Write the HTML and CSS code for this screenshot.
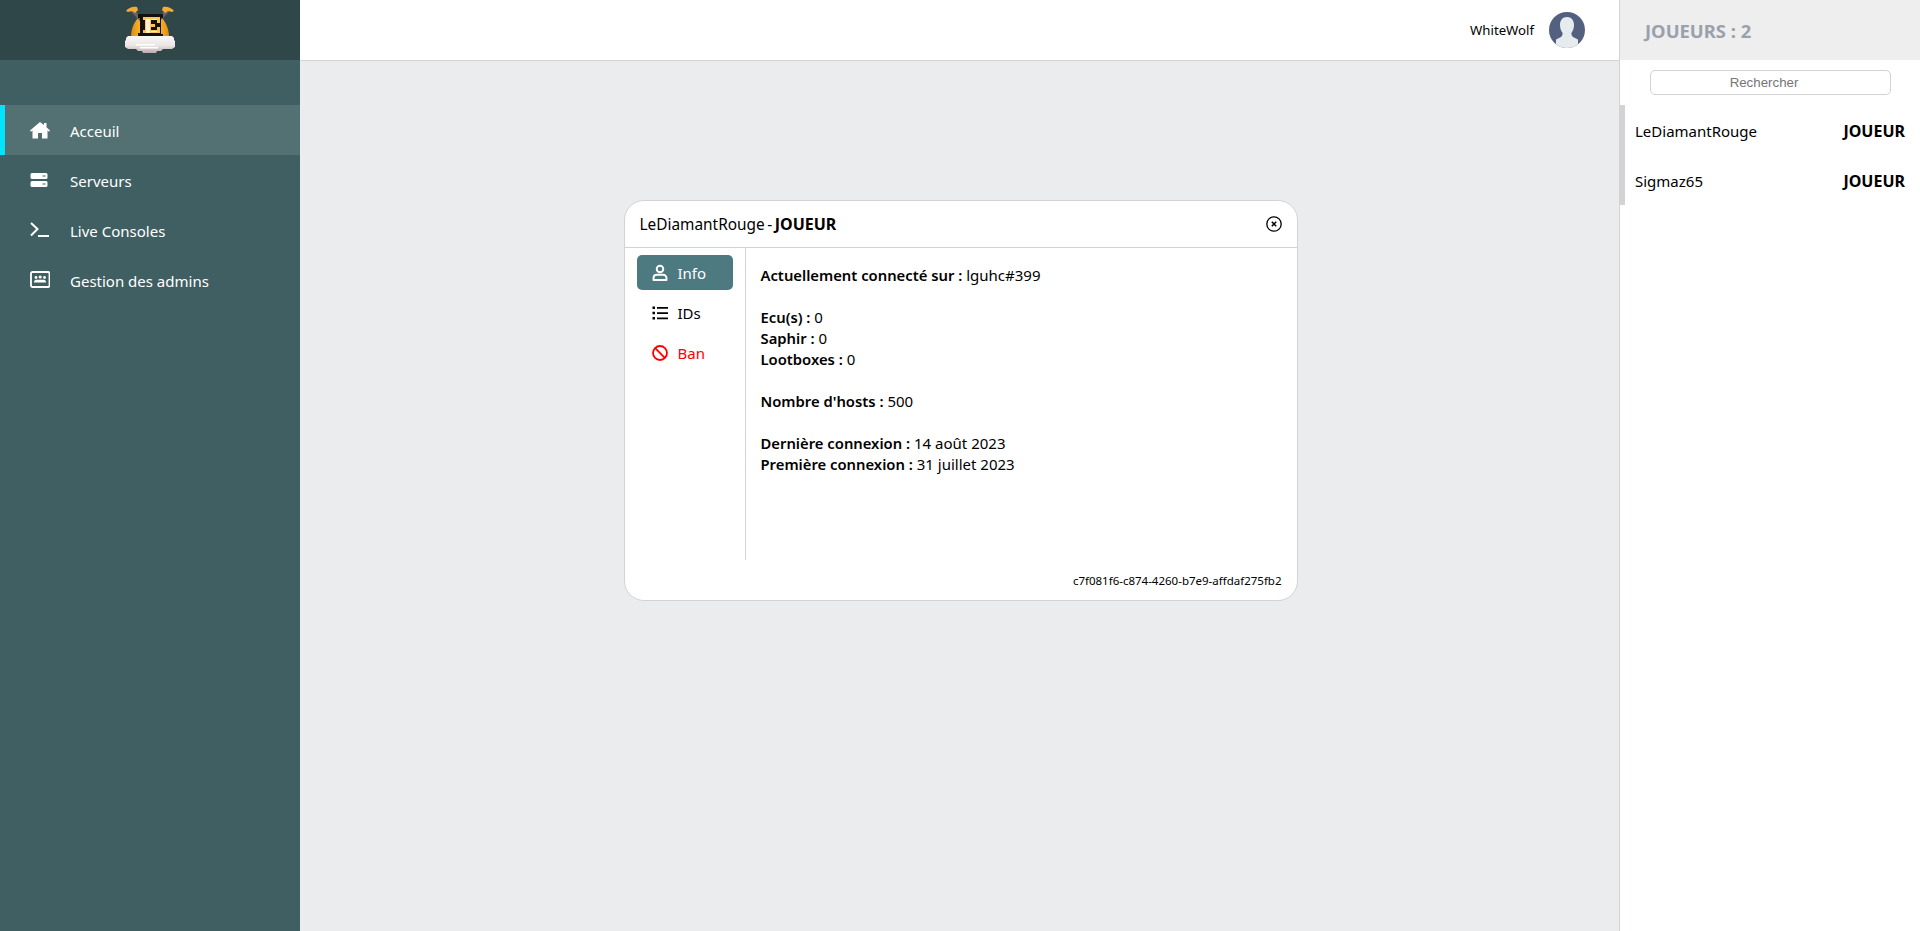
FILE: index.html
```html
<!DOCTYPE html>
<html lang="fr">
<head>
<meta charset="utf-8">
<title>Accueil</title>
<link rel="stylesheet" href="styles.css">
</head>
<body>
<div class="app">
  <aside class="sidebar">
    <div class="brand">
      <svg class="logo" width="50" height="48" viewBox="0 0 50 48">
        <defs>
          <linearGradient id="cloud" x1="0" y1="0" x2="0" y2="1"><stop offset="0" stop-color="#fbf8f8"/><stop offset=".55" stop-color="#ece6e6"/><stop offset="1" stop-color="#b9a9ab"/></linearGradient>
          <linearGradient id="gold" x1="0" y1="0" x2="1" y2="0"><stop offset="0" stop-color="#e08a10"/><stop offset=".3" stop-color="#ffc02e"/><stop offset=".7" stop-color="#ffc02e"/><stop offset="1" stop-color="#e08a10"/></linearGradient>
        </defs>
        <path d="M6 32c0-8 2-14 7-20h24c5 6 7 12 7 20z" fill="url(#gold)"/>
        <path d="M7 4l12 13" stroke="#6f5f66" stroke-width="3.500" fill="none"/>
        <path d="M43 4l-12 13" stroke="#6f5f66" stroke-width="3.500" fill="none"/>
        <path d="M1 5c2-3 7-5 11-4l1 3-3 3-3-2-4 1z" fill="#f5ab32"/>
        <path d="M49 5c-2-3-7-5-11-4l-1 3 3 3 3-2 4 1z" fill="#f5ab32"/>
        <path d="M13 8h25v4h-2v16h2v3H13v-4h2V12h-2z" fill="#17110c"/>
        <path d="M18 11h17v6h-3v-3h-6v4h4v3h-4v3h6v-3h3v6H18v-3h2V14h-2z" fill="#f7c75d"/>
        <path d="M21 13h4v14h-4zM26 13h6v1h-6zM26 25h6v1h-6z" fill="#fff1c9"/>
        <path d="M3 30h44l2 2v2l1 1v6l-3 2h-9l-2 2h-4l-1 2H18l-1-2h-4l-2-2H3l-3-2v-6l1-1v-2z" fill="url(#cloud)"/>
        <path d="M11 38h19v1.500H11zM15 41h18v1.500H15z" fill="#fff"/>
      </svg>
    </div>
    <nav class="nav">
      <a class="nav-item is-active">
        <svg class="nav-icon" viewBox="0 0 20 18" width="20" height="18"><path fill="#fff" d="M10 1 0 9.600l.9 1.100L2.500 9.400V17.500h5.500v-5.500h4v5.500h5.500V9.400l1.600 1.300.9-1.100L16.500 6.200V2h-2.500v2.100z"/></svg>
        <span>Acceuil</span>
      </a>
      <a class="nav-item">
        <svg class="nav-icon" viewBox="0 0 20 18" width="20" height="18"><path fill="#fff" fill-rule="evenodd" d="M2 2h14a1.500 1.500 0 0 1 1.500 1.500v3A1.500 1.500 0 0 1 16 8H2A1.500 1.500 0 0 1 .5 6.500v-3A1.500 1.500 0 0 1 2 2zm10.500 2.500v1h3v-1zM2 10h14a1.500 1.500 0 0 1 1.500 1.500v3A1.500 1.500 0 0 1 16 16H2a1.500 1.500 0 0 1-1.500-1.500v-3A1.500 1.500 0 0 1 2 10zm10.500 2.500v1h3v-1z"/></svg>
        <span>Serveurs</span>
      </a>
      <a class="nav-item">
        <svg class="nav-icon" viewBox="0 0 20 18" width="20" height="18"><path fill="none" stroke="#fff" stroke-width="2" d="M1 2l6.500 6L1 14.500"/><path fill="#fff" d="M8 14h11v2H8z"/></svg>
        <span>Live Consoles</span>
      </a>
      <a class="nav-item">
        <svg class="nav-icon" viewBox="0 0 20 18" width="20" height="18"><rect x="1" y="1" width="18.500" height="15" rx="1.500" fill="none" stroke="#fff" stroke-width="1.800"/><circle cx="6" cy="6.500" r="1.400" fill="#fff"/><circle cx="10.200" cy="6" r="1.600" fill="#fff"/><circle cx="14.500" cy="6.500" r="1.400" fill="#fff"/><path fill="#fff" d="M4 11.500c0-2 1-2.800 2-2.800h8c1 0 2 .8 2 2.800z"/></svg>
        <span>Gestion des admins</span>
      </a>
    </nav>
  </aside>

  <div class="main">
    <header class="topbar">
      <span class="username">WhiteWolf</span>
      <svg class="avatar" viewBox="0 0 36 36" width="36" height="36">
        <defs><clipPath id="avatar-clip"><circle cx="18" cy="18" r="18"/></clipPath></defs>
        <g clip-path="url(#avatar-clip)">
          <rect width="36" height="36" fill="#546080"/>
          <path fill="#e6ebee" d="M18 5c4.500 0 7 3.500 7 8 0 3.500-1.200 6-2.400 7.500-.5 1.500 0 3.500 1.400 4.500l5 2.500V36H7v-8.500l5-2.500c1.400-1 1.900-3 1.400-4.500C12.200 19 11 16.500 11 13c0-4.500 2.500-8 7-8z"/>
        </g>
      </svg>
    </header>
    <main class="content">
      <section class="modal">
        <div class="modal-head">
          <div class="modal-title"><span>LeDiamantRouge</span> - <strong>JOUEUR</strong></div>
          <svg class="close" viewBox="0 0 16 16" width="16" height="16"><circle cx="8" cy="8" r="7.200" fill="none" stroke="#000" stroke-width="1.300"/><path d="M5.800 5.800l4.400 4.400M10.200 5.800l-4.400 4.400" stroke="#000" stroke-width="1.500"/></svg>
        </div>
        <div class="modal-body">
          <div class="tabs">
            <a class="tab is-selected">
              <svg viewBox="0 0 16 18" width="16" height="18"><circle cx="8" cy="5" r="3.300" fill="none" stroke="#fff" stroke-width="1.900"/><path d="M1.500 16v-2c0-2 1.500-3.300 3.500-3.300h6c2 0 3.500 1.300 3.500 3.300v2z" fill="none" stroke="#fff" stroke-width="1.900" stroke-linejoin="round"/></svg>
              <span>Info</span>
            </a>
            <a class="tab">
              <svg viewBox="0 0 16 18" width="16" height="18"><path fill="#000" d="M.5 2.500h2.500v2.500H.5zM.5 7.800h2.500v2.500H.5zM.5 13h2.500v2.500H.5zM5 3h11v1.800H5zM5 8.200h11V10H5zM5 13.400h11v1.800H5z"/></svg>
              <span>IDs</span>
            </a>
            <a class="tab tab-danger">
              <svg viewBox="0 0 16 18" width="16" height="18"><circle cx="8" cy="9" r="7" fill="none" stroke="#f00" stroke-width="1.800"/><path d="M3.200 4.200l9.600 9.600" stroke="#f00" stroke-width="1.800"/></svg>
              <span>Ban</span>
            </a>
          </div>
          <div class="details">
            <p><b>Actuellement connecté sur :</b> lguhc#399</p>
            <p><b>Ecu(s) :</b> 0<br><b>Saphir :</b> 0<br><b>Lootboxes :</b> 0</p>
            <p><b>Nombre d'hosts :</b> 500</p>
            <p><b>Dernière connexion :</b> 14 août 2023<br><b>Première connexion :</b> 31 juillet 2023</p>
          </div>
        </div>
        <div class="uuid">c7f081f6-c874-4260-b7e9-affdaf275fb2</div>
      </section>
    </main>
  </div>

  <aside class="players">
    <div class="players-head">JOUEURS : 2</div>
    <div class="search-wrap"><input class="search" type="text" placeholder="Rechercher"></div>
    <ul class="player-list">
      <li class="player"><span>LeDiamantRouge</span><strong>JOUEUR</strong></li>
      <li class="player"><span>Sigmaz65</span><strong>JOUEUR</strong></li>
    </ul>
  </aside>
</div>
</body>
</html>
```
FILE: styles.css
```css
* { box-sizing: border-box; }
html, body { margin: 0; height: 100%; overflow: hidden; }
body { font-family: "Noto Sans", "Open Sans", sans-serif; font-size: 15px; color: #000; background: #ebecee; }
.app { display: flex; height: 931px; }

.sidebar { width: 300px; flex: none; background: #3f5f63; color: #fff; }
.brand { height: 60px; background: #2f4749; display: flex; justify-content: center; align-items: flex-start; }
.logo { display: block; margin-top: 6px; }
.nav { margin-top: 45px; display: flex; flex-direction: column; }
.nav-item { height: 50px; display: flex; align-items: center; padding-left: 30px; gap: 20px; }
.nav-item span { padding-top: 2px; }
.nav-item.is-active { background: #537073; box-shadow: inset 5px 0 0 #00e5ff; }
.nav-icon { flex: none; }

.main { flex: 1; min-width: 0; display: flex; flex-direction: column; }
.topbar { height: 61px; flex: none; background: #fff; border-bottom: 1px solid #d3d3d3; display: flex; justify-content: flex-end; align-items: center; padding-right: 34px; gap: 15px; }
.username { font-size: 13.200px; }
.avatar { display: block; margin-top: -1px; }
.content { flex: 1; display: flex; justify-content: center; padding-top: 139px; }

.modal { width: 674px; height: 401px; margin-left: 2px; background: #fff; border: 1px solid #d3d3d3; border-radius: 20px; display: flex; flex-direction: column; }
.modal-head { height: 47px; flex: none; border-bottom: 1px solid #d3d3d3; display: flex; justify-content: space-between; align-items: center; padding: 0 15px; }
.modal-title { font-size: 15.400px; word-spacing: -1.500px; }
.modal-title strong { font-size: 16px; }
.modal-body { display: flex; height: 312px; flex: none; }
.tabs { width: 121px; flex: none; border-right: 1px solid #d3d3d3; padding: 7px 12px 0; display: flex; flex-direction: column; gap: 5px; }
.tab { height: 35px; display: flex; align-items: center; gap: 10px; padding-left: 15px; border-radius: 5px; }
.tab.is-selected { background: #4d7a80; color: #fff; }
.tab-danger { color: #f00; }
.details { padding: 17px 15px 0; line-height: 21px; }
.details p { margin: 0 0 21px; }
.details b { font-weight: 600; font-size: 14.800px; }
.uuid { font-size: 11.500px; text-align: right; padding: 13px 15px 0 0; }

.players { width: 301px; flex: none; background: #fff; border-left: 1px solid #d3d3d3; }
.players-head { height: 60px; background: #eee; display: flex; align-items: center; padding-left: 25px; font-size: 18.400px; font-weight: 700; color: #99a1ad; }
.search-wrap { padding: 10px 30px 0; }
.search { display: block; width: 241px; height: 25px; border: 1px solid #d3d3d3; border-radius: 5px; text-align: center; font-family: "Liberation Sans", sans-serif; font-size: 13.300px; padding: 0 13px 0 0; background: #fff; }
.search::placeholder { color: #757575; opacity: 1; }
.player-list { list-style: none; margin: 10px 0 0 -1px; padding: 0; border-left: 6px solid #d3d3d3; }
.player { height: 50px; display: flex; justify-content: space-between; align-items: center; padding: 2px 15px 0 10px; }
.player strong { font-size: 16px; }
```
